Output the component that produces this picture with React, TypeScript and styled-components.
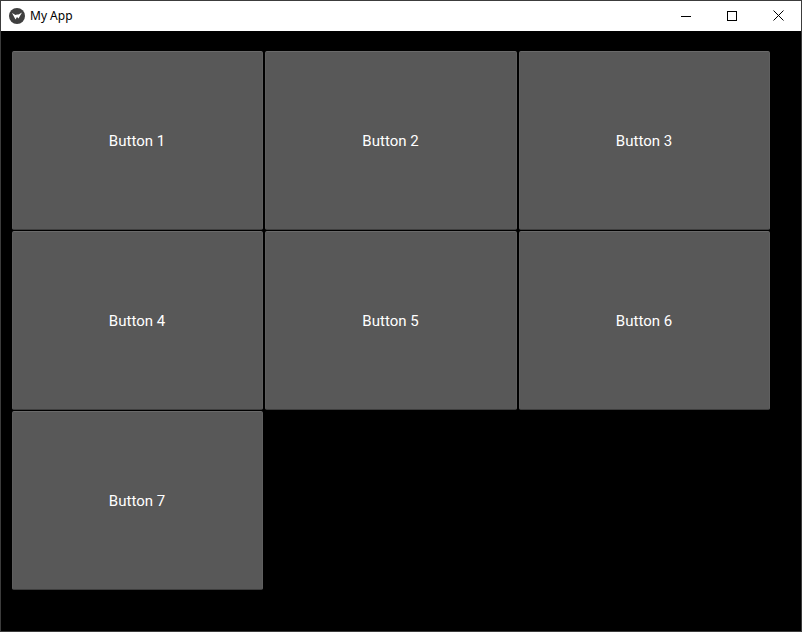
import * as React from "react";
import styled, { createGlobalStyle } from "styled-components";

const GlobalStyle = createGlobalStyle`
    html, body {
        margin: 0;
        padding: 0;
        background: #000;
    }
`;

const Window = styled.div`
    width: 802px;
    height: 632px;
    box-sizing: border-box;
    border: 1px solid #3c3c3c;
    background: #000;
    display: flex;
    flex-direction: column;
    overflow: hidden;
`;

const TitleBar = styled.div`
    height: 30px;
    box-sizing: border-box;
    flex: none;
    background: #fff;
    display: flex;
    align-items: center;
    padding: 0 0 1px 8px;
`;

const AppIcon = styled.svg`
    width: 16px;
    height: 16px;
    flex: none;
`;

const Title = styled.span`
    margin-left: 5px;
    font-family: "Noto Sans", "Open Sans", sans-serif;
    font-size: 12px;
    color: #000;
    flex: 1;
`;

const WindowButton = styled.div`
    width: 46px;
    height: 29px;
    display: flex;
    align-items: center;
    justify-content: center;
`;

const Grid = styled.div`
    display: grid;
    grid-template-columns: 251px 252px 251px;
    grid-auto-rows: 179px;
    column-gap: 2px;
    row-gap: 1px;
    padding: 20px 0 0 11px;
`;

const GridButton = styled.button`
    appearance: none;
    margin: 0;
    padding: 1px 1px 0 0;
    border: 1px solid #5f5f5f;
    border-top-color: #6a6a6a;
    border-bottom-color: #3e3e3e;
    border-radius: 2px;
    background: #585858;
    color: #fff;
    font-family: Roboto, sans-serif;
    font-size: 15px;
`;

const labels = [1, 2, 3, 4, 5, 6, 7].map((n) => `Button ${n}`);

export default function App() {
    return (
        <>
            <GlobalStyle />
            <Window>
                <TitleBar>
                    <AppIcon viewBox="0 0 16 16">
                        <circle cx="8" cy="8" r="8" fill="#3f3f3f" />
                        <path d="M3 5 L6.5 11.5 L8 9 L9.5 10.5 L13 4.5 L9.5 6.5 L8 6.5 L6.5 7 Z" fill="#fff" />
                    </AppIcon>
                    <Title>My App</Title>
                    <WindowButton>
                        <svg width="10" height="10" viewBox="0 0 10 10">
                            <path d="M0 5.5H10" stroke="#000" strokeWidth="1" fill="none" />
                        </svg>
                    </WindowButton>
                    <WindowButton>
                        <svg width="10" height="10" viewBox="0 0 10 10">
                            <rect x="0.5" y="0.5" width="9" height="9" stroke="#000" strokeWidth="1" fill="none" />
                        </svg>
                    </WindowButton>
                    <WindowButton>
                        <svg width="11" height="11" viewBox="0 0 11 11">
                            <path d="M0.5 0.5L10.5 10.5M10.5 0.5L0.5 10.5" stroke="#000" strokeWidth="1" fill="none" />
                        </svg>
                    </WindowButton>
                </TitleBar>
                <Grid>
                    {labels.map((label) => (
                        <GridButton key={label}>{label}</GridButton>
                    ))}
                </Grid>
            </Window>
        </>
    );
}
